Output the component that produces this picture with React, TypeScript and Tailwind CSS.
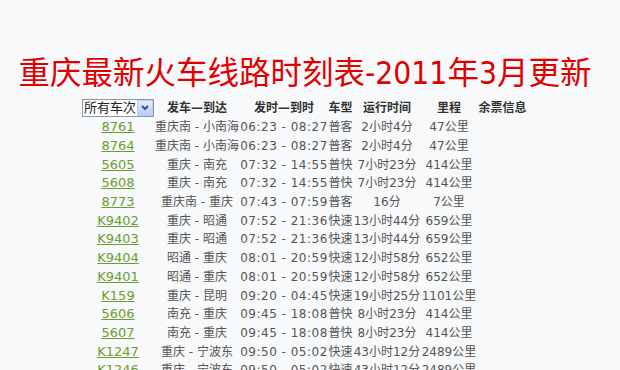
const trains = [
  { no: '8761', route: '重庆南 - 小南海', time: '06:23 - 08:27', type: '普客', dur: '2小时4分', dist: '47公里' },
  { no: '8764', route: '重庆南 - 小南海', time: '06:23 - 08:27', type: '普客', dur: '2小时4分', dist: '47公里' },
  { no: '5605', route: '重庆 - 南充', time: '07:32 - 14:55', type: '普快', dur: '7小时23分', dist: '414公里' },
  { no: '5608', route: '重庆 - 南充', time: '07:32 - 14:55', type: '普快', dur: '7小时23分', dist: '414公里' },
  { no: '8773', route: '重庆南 - 重庆', time: '07:43 - 07:59', type: '普客', dur: '16分', dist: '7公里' },
  { no: 'K9402', route: '重庆 - 昭通', time: '07:52 - 21:36', type: '快速', dur: '13小时44分', dist: '659公里' },
  { no: 'K9403', route: '重庆 - 昭通', time: '07:52 - 21:36', type: '快速', dur: '13小时44分', dist: '659公里' },
  { no: 'K9404', route: '昭通 - 重庆', time: '08:01 - 20:59', type: '快速', dur: '12小时58分', dist: '652公里' },
  { no: 'K9401', route: '昭通 - 重庆', time: '08:01 - 20:59', type: '快速', dur: '12小时58分', dist: '652公里' },
  { no: 'K159', route: '重庆 - 昆明', time: '09:20 - 04:45', type: '快速', dur: '19小时25分', dist: '1101公里' },
  { no: '5606', route: '南充 - 重庆', time: '09:45 - 18:08', type: '普快', dur: '8小时23分', dist: '414公里' },
  { no: '5607', route: '南充 - 重庆', time: '09:45 - 18:08', type: '普快', dur: '8小时23分', dist: '414公里' },
  { no: 'K1247', route: '重庆 - 宁波东', time: '09:50 - 05:02', type: '快速', dur: '43小时12分', dist: '2489公里' },
  { no: 'K1246', route: '重庆 - 宁波东', time: '09:50 - 05:02', type: '快速', dur: '43小时12分', dist: '2489公里' },
]

const cols = 'grid grid-cols-[72px_86px_88px_25px_68px_56px_51px] items-center text-center whitespace-nowrap'

export default function App() {
  return (
    <div className="h-[370px] overflow-hidden bg-[#f8f9fb] font-['DejaVu_Sans','Noto_Sans_CJK_SC',sans-serif]">
      <div className="w-[610px]">
        <h1 className="pt-[53px] h-[98px] text-center text-[31.5px] leading-[40px] text-[#e00000] font-['Liberation_Sans_Narrow','DejaVu_Sans_Condensed','Noto_Sans_CJK_SC',sans-serif]">
          重庆最新火车线路时刻表-2011年3月更新
        </h1>
        <div className="w-[446px] mx-auto">
          <div className={`${cols} h-[20px] text-[12px] font-bold text-[#333]`}>
            <div className="flex justify-start">
              <div className="flex h-[18px] w-[72px] items-center border border-[#8c9aa8] bg-white">
                <span className="flex-1 text-left pl-[1px] text-[13px] font-normal text-[#222] leading-[16px]">所有车次</span>
                <div className="flex h-[16px] w-[16px] items-center justify-center border border-[#b8cbf0] bg-gradient-to-b from-[#e5edfd] to-[#b8cdf5]">
                  <svg width="8" height="6" viewBox="0 0 8 6">
                    <path d="M1 1 L4 4 L7 1" stroke="#3c4f8c" strokeWidth="2" fill="none" />
                  </svg>
                </div>
              </div>
            </div>
            <div>发车—到达</div>
            <div>发时—到时</div>
            <div>车型</div>
            <div>运行时间</div>
            <div>里程</div>
            <div>余票信息</div>
          </div>
          {trains.map((t, i) => (
            <div key={i} className={`${cols} h-[18.7px] text-[12px] leading-[18px] text-[#555]`}>
              <a className="text-[13px] text-[#6a9e2f] underline">{t.no}</a>
              <div>{t.route}</div>
              <div className="tracking-[0.5px]">{t.time}</div>
              <div>{t.type}</div>
              <div>{t.dur}</div>
              <div>{t.dist}</div>
              <div></div>
            </div>
          ))}
        </div>
      </div>
    </div>
  )
}
